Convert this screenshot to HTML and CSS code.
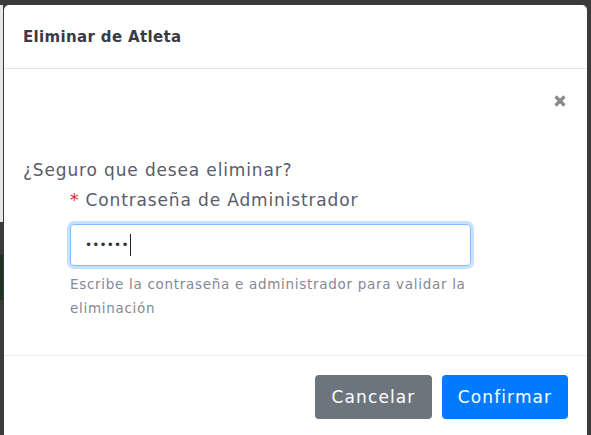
FILE: index.html
```html
<!DOCTYPE html>
<html lang="es">
<head>
<meta charset="utf-8">
<title>Eliminar de Atleta</title>
<link rel="stylesheet" href="styles.css">
</head>
<body>
<div class="modal">
  <div class="modal-header">
    <h5 class="modal-title">Eliminar de Atleta</h5>
  </div>
  <div class="modal-body">
    <div class="close-row">
      <button class="close" type="button" aria-label="Cerrar">
        <svg width="12" height="12" viewBox="0 0 12 12"><path d="M1.5 1.5 L10.5 10.5 M10.5 1.5 L1.5 10.5" stroke="#8a8a8a" stroke-width="3.2" stroke-linecap="butt"/></svg>
      </button>
    </div>
    <p class="question">¿Seguro que desea eliminar?</p>
    <div class="form-group">
      <label class="label"><span class="req">*</span> Contraseña de Administrador</label>
      <div class="input"><span class="dots">••••••</span><span class="caret"></span></div>
      <small class="help">Escribe la contraseña e administrador para validar la eliminación</small>
    </div>
  </div>
  <div class="modal-footer">
    <button class="btn btn-secondary" type="button">Cancelar</button>
    <button class="btn btn-primary" type="button">Confirmar</button>
  </div>
</div>
</body>
</html>
```

FILE: styles.css
```css
html, body {
  margin: 0;
  padding: 0;
  height: 100%;
}
body {
  background-color: #3a3a3a;
  background-image: linear-gradient(to bottom, transparent 0, transparent 5px, #e6e6e6 5px, #e6e6e6 222px, transparent 222px),
                    linear-gradient(to bottom, transparent 255px, #1d3320 255px, #1d3320 300px, transparent 300px);
  background-size: 3px 100%, 3px 100%;
  background-repeat: no-repeat;
  font-family: "DejaVu Sans", "Liberation Sans", sans-serif;
  overflow: hidden;
  padding: 5px 4px 0 4px;
  box-sizing: border-box;
}
.modal {
  width: 583px;
  height: 460px;
  background: #fff;
  border-radius: 5px 5px 0 0;
  display: flex;
  flex-direction: column;
}
.modal-header {
  height: 63px;
  border-bottom: 1px solid #e3e6f0;
  display: flex;
  align-items: center;
  padding: 0 19px;
}
.modal-title {
  margin: 0;
  font-size: 15px;
  font-weight: 700;
  color: #3a3b45;
  letter-spacing: 0.35px;
}
.modal-body {
  height: 286px;
  padding: 0 19px;
  box-sizing: border-box;
  display: flex;
  flex-direction: column;
}
.close-row {
  display: flex;
  justify-content: flex-end;
  padding-top: 26px;
  padding-right: 2px;
}
.close {
  border: 0;
  background: none;
  padding: 0;
  width: 12px;
  height: 12px;
  display: flex;
}
.question {
  margin: 51px 0 0 0;
  font-size: 17px;
  line-height: 24px;
  letter-spacing: 0.85px;
  color: #5a5c69;
}
.form-group {
  margin-left: 47px;
  display: flex;
  flex-direction: column;
}
.label {
  margin-top: 6px;
  font-size: 17px;
  line-height: 24px;
  letter-spacing: 0.85px;
  color: #5a5c69;
}
.req {
  color: #e02020;
}
.input {
  margin-top: 12px;
  width: 401px;
  height: 42px;
  box-sizing: border-box;
  border: 1px solid #80bdff;
  border-radius: 4px;
  box-shadow: 0 0 0 3px rgba(0, 123, 255, 0.22);
  display: flex;
  align-items: center;
  padding-left: 14px;
}
.dots {
  font-size: 12px;
  letter-spacing: 0.2px;
  color: #333;
}
.caret {
  width: 1px;
  height: 22px;
  background: #222;
  margin-left: 1px;
}
.help {
  margin-top: 6px;
  font-size: 13.5px;
  line-height: 24px;
  letter-spacing: 0.7px;
  color: #858796;
  width: 405px;
}
.modal-footer {
  border-top: 1px solid #e9ecef;
  display: flex;
  justify-content: flex-end;
  gap: 10px;
  padding: 19px 19px 0 0;
}
.btn {
  height: 44px;
  border: 0;
  border-radius: 4px;
  color: #fff;
  font-family: inherit;
  font-size: 17px;
  letter-spacing: 1.1px;
  padding: 0 6px;
}
.btn-secondary {
  background: #6c757d;
  width: 117px;
}
.btn-primary {
  background: #007bff;
  width: 126px;
}
```
